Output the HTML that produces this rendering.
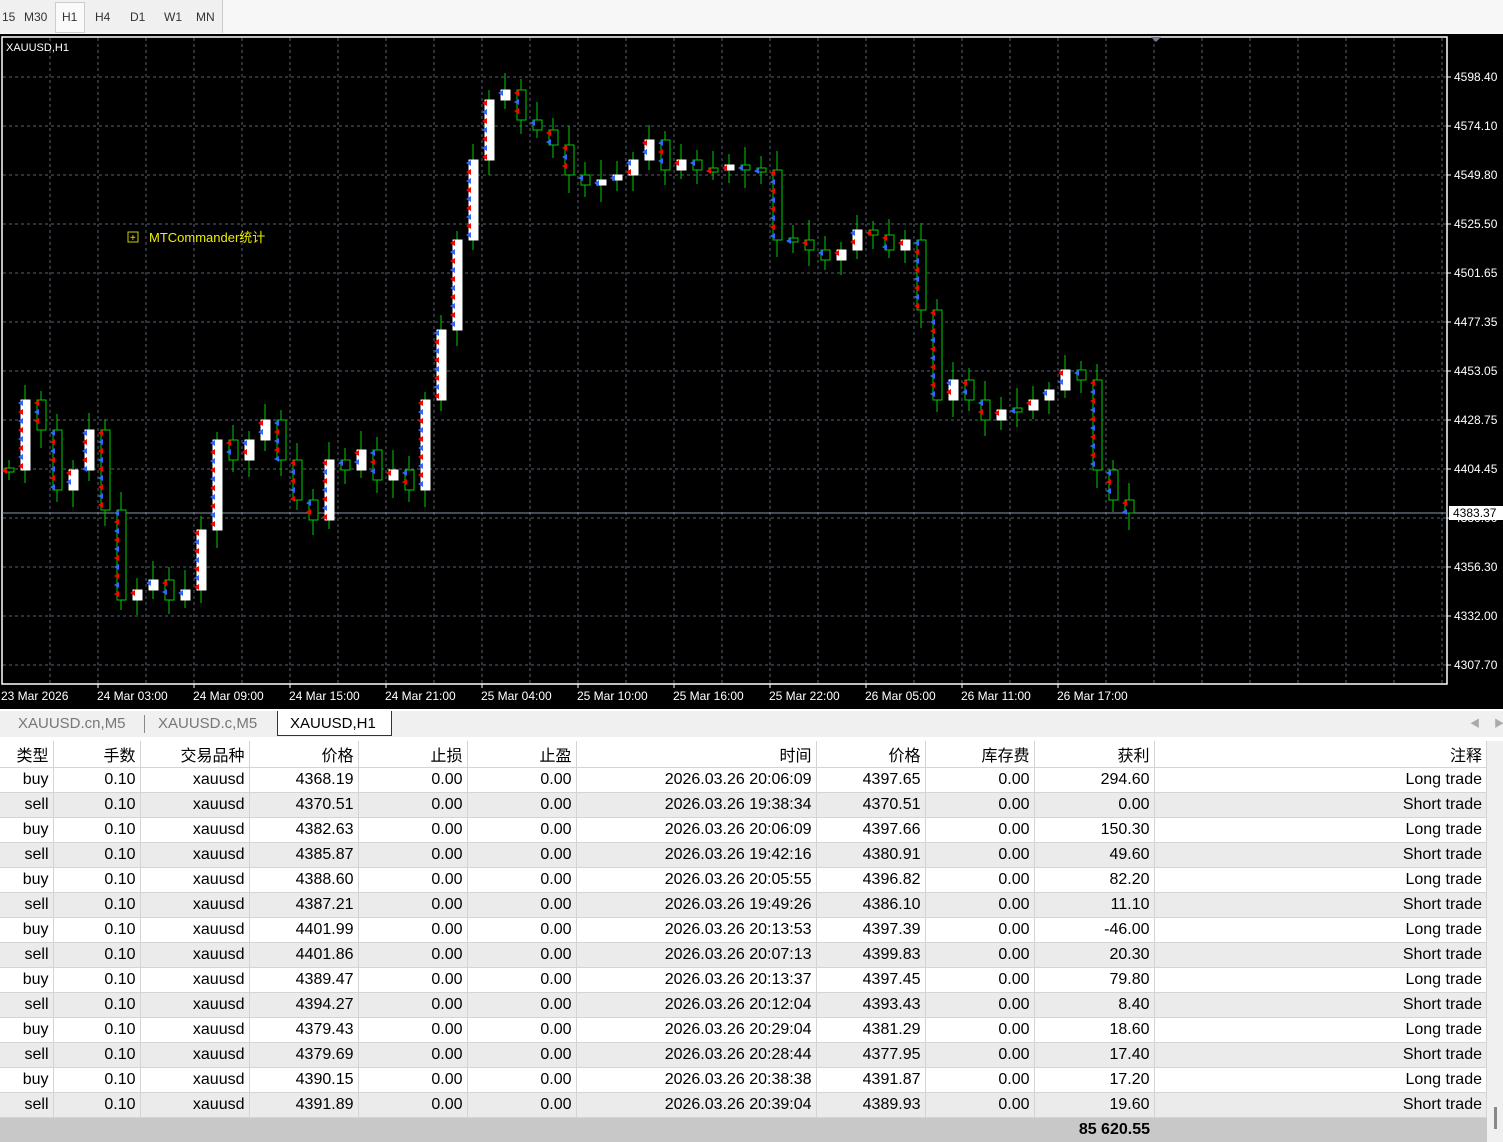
<!DOCTYPE html>
<html><head><meta charset="utf-8"><style>
*{margin:0;padding:0;box-sizing:border-box}
body{width:1503px;height:1142px;overflow:hidden;background:#fff;font-family:"Liberation Sans","Noto Sans CJK SC",sans-serif;position:relative}
#tb{position:absolute;left:0;top:0;width:1503px;height:34px;background:#f7f7f7}
#tb .g{position:absolute;left:0;top:0;width:223px;height:33px;background:#f0f0f0;border-right:1px solid #ccc}
#tb span{position:absolute;top:10px;font-size:12px;color:#333}
#chart{position:absolute;left:0;top:34px;width:1503px;height:675px;background:#000}
#tabs{position:absolute;left:0;top:709px;width:1503px;height:28px;background:#f0f0f0;border-top:2px solid #fff}
#tabs span{position:absolute;top:4px;font-size:15px;color:#777}
table{position:absolute;left:0;top:741px;border-collapse:collapse;width:1487px;font-size:16px}
td{height:25px;border-right:1px solid #d4d4d4;border-bottom:1px solid #d4d4d4;text-align:right;padding:0 4px;white-space:nowrap;background:#fff}
tr.h td{height:26px}
tr.z td{background:#ebebeb}
tr.t td{background:#c8c8c8;font-weight:bold;border:none}
</style></head><body>
<div id="tb"><div class="g"></div>
<span style="left:2px">15</span><span style="left:24px">M30</span>
<div style="position:absolute;left:55px;top:2px;width:30px;height:31px;background:#fafafa;border:1px solid #ccc"></div>
<span style="left:62px">H1</span><span style="left:95px">H4</span><span style="left:130px">D1</span><span style="left:164px">W1</span><span style="left:196px">MN</span></div>
<div id="chart"><svg id="sv" width="1503" height="675" viewBox="0 34 1503 675" style="position:absolute;left:0;top:0">
<rect x="2" y="37" width="1445" height="647" fill="none" stroke="#fff" stroke-width="1.5"/>
<g id="grid" stroke="#5a6470" stroke-dasharray="3,3" stroke-width="1"></g>
<line x1="2" y1="513" x2="1447" y2="513" stroke="#8899aa"/>
<g id="cd"></g>
<text x="6" y="51" fill="#fff" font-size="11" font-family="Liberation Sans">XAUUSD,H1</text>
<rect x="128" y="232" width="10" height="10" fill="none" stroke="#cc0"/><text x="130" y="241" fill="#ee0" font-size="10">+</text>
<text x="149" y="242" fill="#ee0" font-size="13" font-family="Liberation Sans,Noto Sans CJK SC">MTCommander统计</text>
<g id="ax" fill="#fff" font-size="12" font-family="Liberation Sans"></g>
<rect x="1449" y="506" width="54" height="14" fill="#fff"/><text x="1453" y="517" fill="#000" font-size="12" font-family="Liberation Sans">4383.37</text>
<polygon points="1151,37 1161,37 1156,42" fill="#778"/>
</svg></div>
<div id="tabs">
<span style="left:18px">XAUUSD.cn,M5</span><div style="position:absolute;left:144px;top:4px;width:1px;height:18px;background:#888"></div>
<span style="left:158px">XAUUSD.c,M5</span>
<div style="position:absolute;left:277px;top:0;width:115px;height:25px;background:#fff;border:1px solid #333;border-top:none"></div>
<span style="left:290px;color:#000">XAUUSD,H1</span>
<span style="left:1470px;font-size:10px;color:#aaa">◀</span><span style="left:1494px;font-size:10px;color:#aaa">▶</span></div>
<table><tbody id="tbl">
<tr class="h"><td style="width:53px">类型</td><td style="width:87px">手数</td><td style="width:109px">交易品种</td><td style="width:109px">价格</td><td style="width:109px">止损</td><td style="width:109px">止盈</td><td style="width:240px">时间</td><td style="width:109px">价格</td><td style="width:109px">库存费</td><td style="width:120px">获利</td><td>注释</td></tr>
</tbody></table>
<div style="position:absolute;left:1487px;top:741px;width:16px;height:401px;background:#f0f0f0"></div>
<div style="position:absolute;left:1494px;top:1107px;width:3px;height:22px;background:#888"></div>
<script>
var d=[["buy","4368.19","2026.03.26 20:06:09","4397.65","294.60","Long"],["sell","4370.51","2026.03.26 19:38:34","4370.51","0.00","Short"],["buy","4382.63","2026.03.26 20:06:09","4397.66","150.30","Long"],["sell","4385.87","2026.03.26 19:42:16","4380.91","49.60","Short"],["buy","4388.60","2026.03.26 20:05:55","4396.82","82.20","Long"],["sell","4387.21","2026.03.26 19:49:26","4386.10","11.10","Short"],["buy","4401.99","2026.03.26 20:13:53","4397.39","-46.00","Long"],["sell","4401.86","2026.03.26 20:07:13","4399.83","20.30","Short"],["buy","4389.47","2026.03.26 20:13:37","4397.45","79.80","Long"],["sell","4394.27","2026.03.26 20:12:04","4393.43","8.40","Short"],["buy","4379.43","2026.03.26 20:29:04","4381.29","18.60","Long"],["sell","4379.69","2026.03.26 20:28:44","4377.95","17.40","Short"],["buy","4390.15","2026.03.26 20:38:38","4391.87","17.20","Long"],["sell","4391.89","2026.03.26 20:39:04","4389.93","19.60","Short"]];
var h="";d.forEach(function(r,i){h+="<tr"+(i%2?' class="z"':'')+"><td>"+r[0]+"</td><td>0.10</td><td>xauusd</td><td>"+r[1]+"</td><td>0.00</td><td>0.00</td><td>"+r[2]+"</td><td>"+r[3]+"</td><td>0.00</td><td>"+r[4]+"</td><td>"+r[5]+" trade</td></tr>"});
h+='<tr class="t"><td colspan="10">85 620.55</td><td></td></tr>';
document.getElementById("tbl").insertAdjacentHTML("beforeend",h);
var g="";
for(var x=50;x<1447;x+=48)g+='<line x1="'+x+'" y1="38" x2="'+x+'" y2="683"/>';
var pl=["4598.40","4574.10","4549.80","4525.50","4501.65","4477.35","4453.05","4428.75","4404.45","4380.00","4356.30","4332.00","4307.70"];
var a="";for(var i=0;i<13;i++){var y=77+i*49;g+='<line x1="3" y1="'+y+'" x2="1446" y2="'+y+'"/>';a+='<line x1="1447" y1="'+y+'" x2="1451" y2="'+y+'" stroke="#fff"/><text x="1454" y="'+(y+4)+'">'+pl[i]+'</text>';}
var tl=["23 Mar 2026","24 Mar 03:00","24 Mar 09:00","24 Mar 15:00","24 Mar 21:00","25 Mar 04:00","25 Mar 10:00","25 Mar 16:00","25 Mar 22:00","26 Mar 05:00","26 Mar 11:00","26 Mar 17:00"];
for(var i=0;i<12;i++){a+='<text x="'+(1+i*96)+'" y="700">'+tl[i]+'</text>';if(i)a+='<line x1="'+(i*96+2)+'" y1="684" x2="'+(i*96+2)+'" y2="688" stroke="#fff"/>';}
document.getElementById("grid").innerHTML=g;document.getElementById("ax").innerHTML=a;
var c=[470,400,430,490,470,430,510,600,590,580,600,590,530,440,460,440,420,460,500,520,460,470,450,480,470,490,400,330,240,160,100,90,120,130,145,175,185,180,175,160,140,170,160,170,170,165,170,170,240,240,250,260,250,230,235,250,240,310,400,380,400,420,410,410,400,390,370,380,470,500,513];
var s="",p=c[0];
for(var i=0;i<c.length;i++){var x=5+i*16,o=p,cl=c[i],t=Math.min(o,cl),b=Math.max(o,cl);if(b-t<4){t-=2;b+=2}
var hi=t-8-(i*7%13),lo=b+8+(i*5%11);
s+='<line x1="'+(x+4)+'" y1="'+hi+'" x2="'+(x+4)+'" y2="'+lo+'" stroke="#0c0"/>';
s+='<rect x="'+x+'" y="'+t+'" width="9" height="'+(b-t)+'" fill="'+(cl<o?"#fff":"#000")+'" stroke="'+(cl<o?"#fff":"#0c0")+'"/>';
for(var k=t+3;k<b;k+=9){s+='<polygon points="'+(x-3)+','+k+' '+(x+2)+','+(k-3)+' '+(x+2)+','+(k+3)+'" fill="'+((k+i)%2?"#f00":"#36f")+'"/>';}
p=cl;}
document.getElementById("cd").innerHTML=s;
</script>
</body></html>
